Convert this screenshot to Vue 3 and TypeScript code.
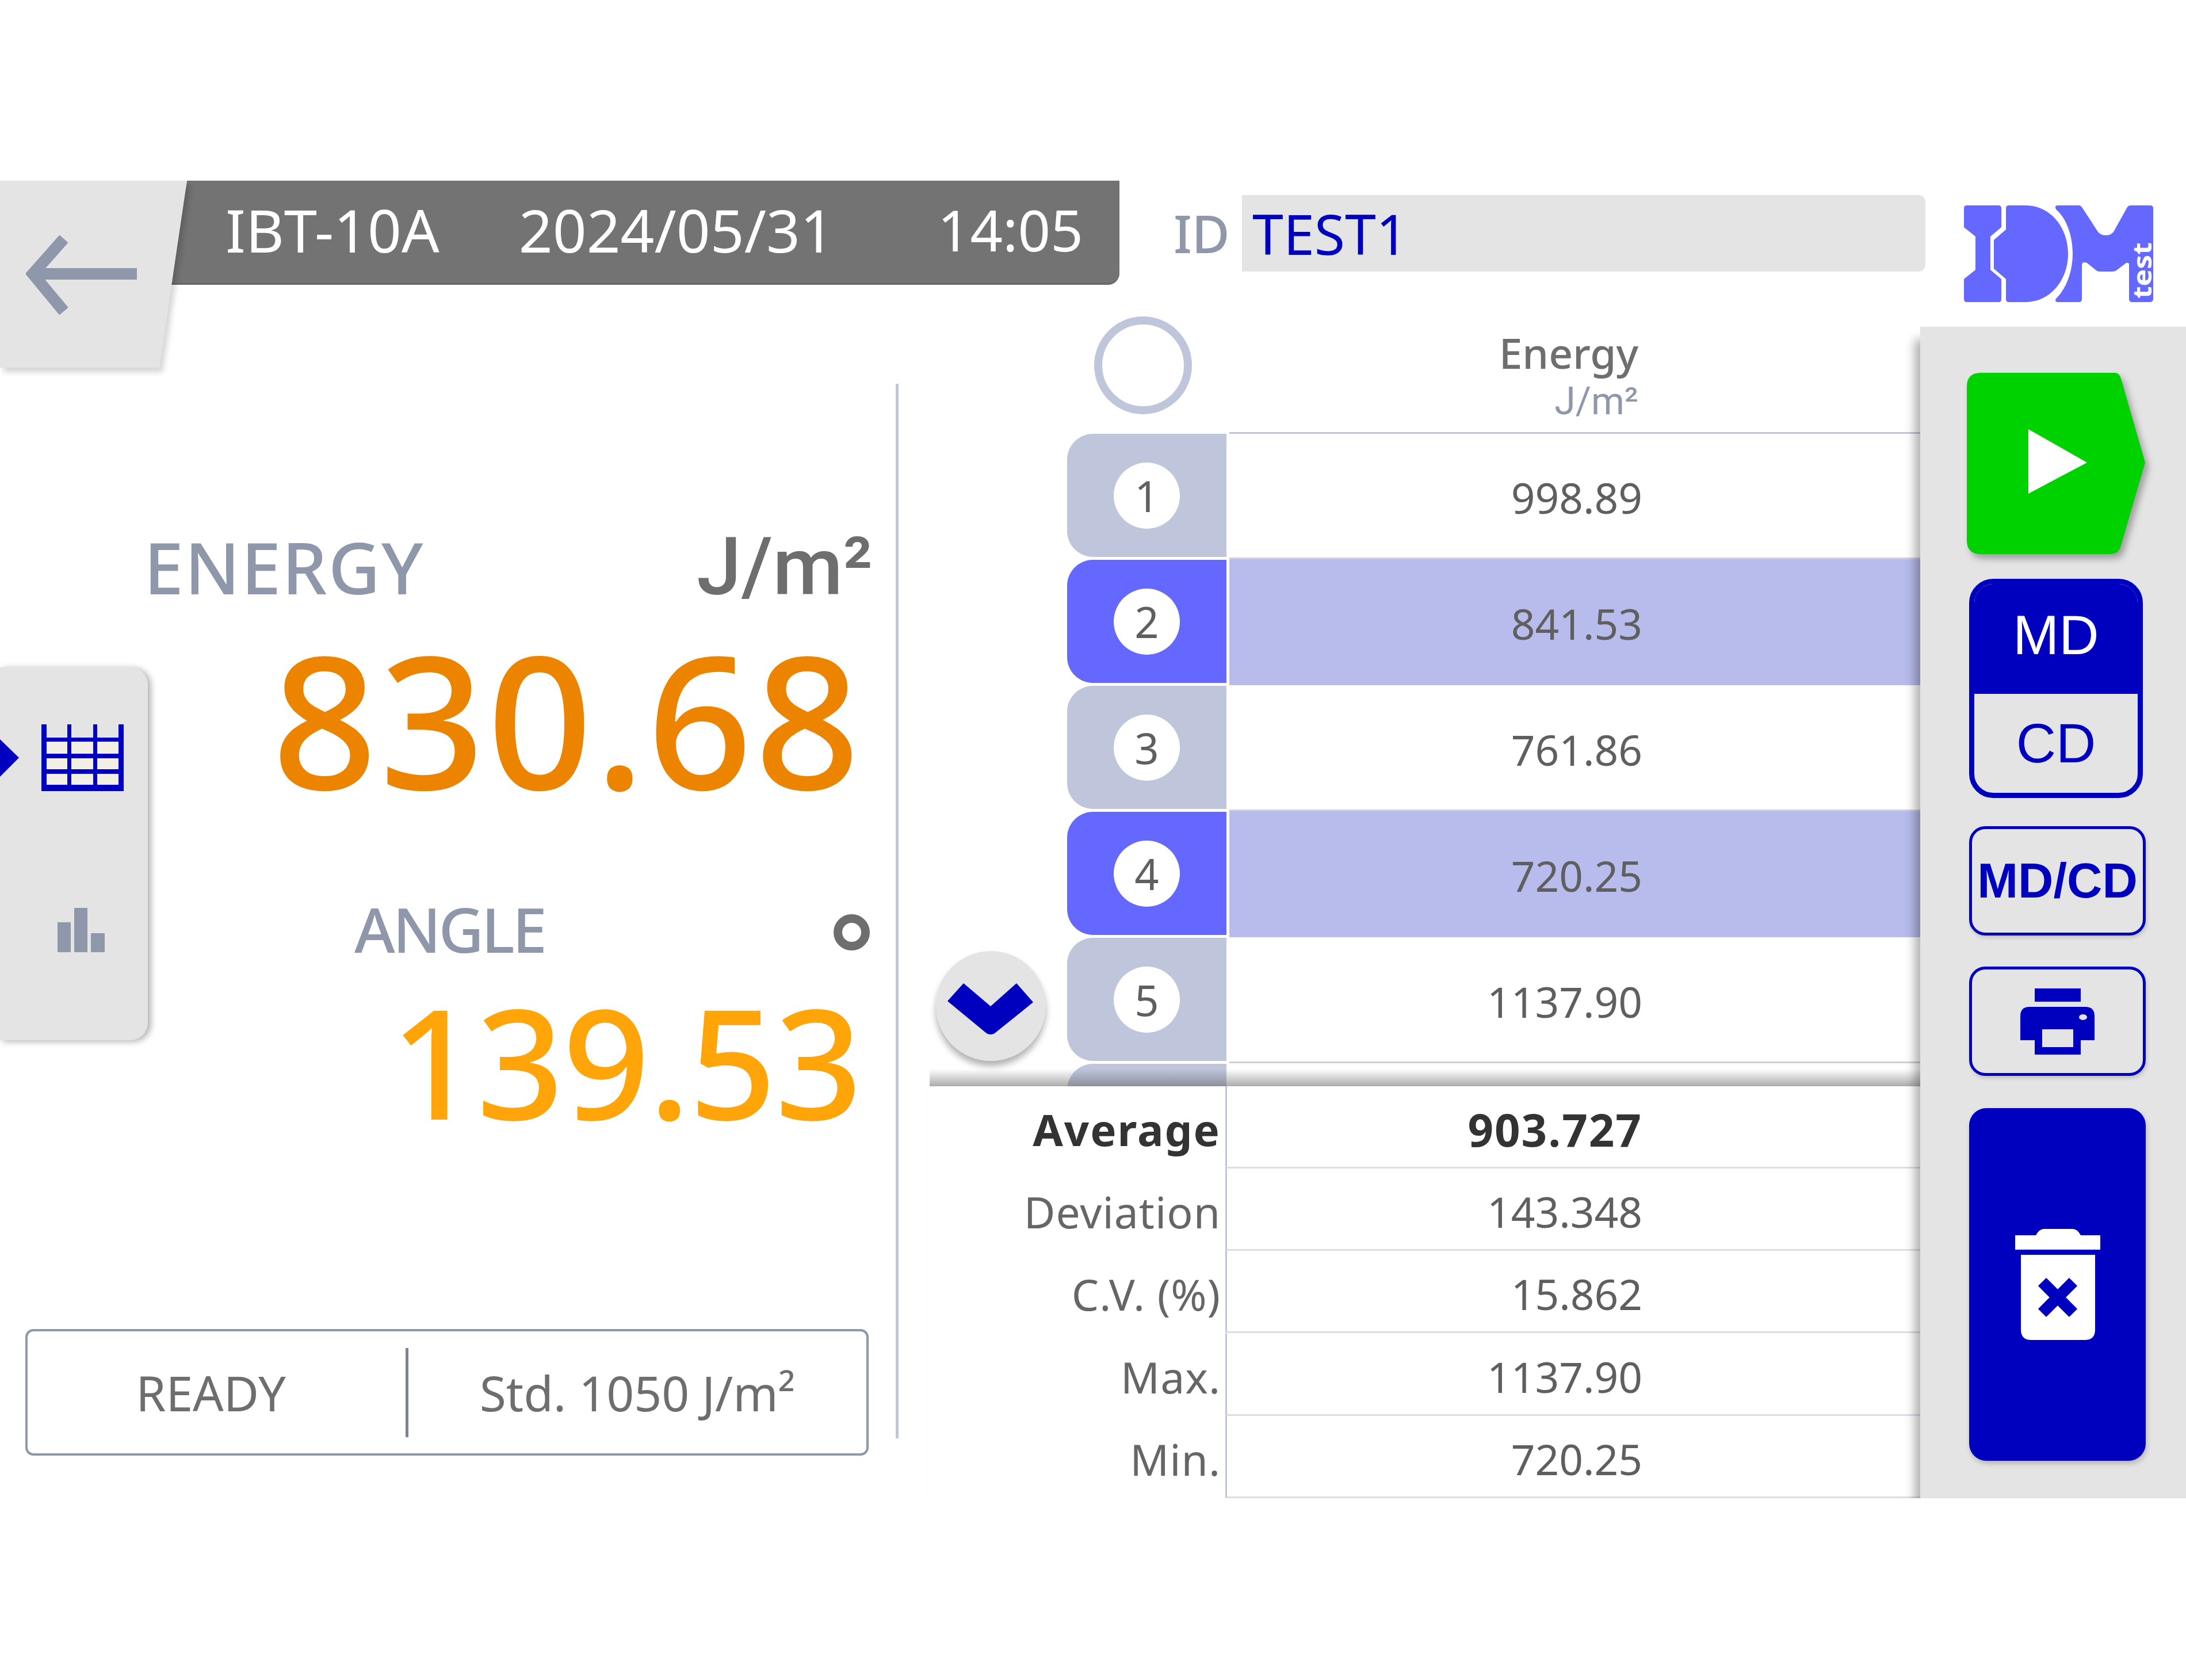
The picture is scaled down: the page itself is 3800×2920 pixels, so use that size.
<script setup lang="ts">
interface Row { n: number; value: string; on: boolean }
interface Stat { label: string; value: string; strong: boolean }
const rows: Row[] = [
  { n: 1, value: '998.89', on: false },
  { n: 2, value: '841.53', on: true },
  { n: 3, value: '761.86', on: false },
  { n: 4, value: '720.25', on: true },
  { n: 5, value: '1137.90', on: false },
]
const stats: Stat[] = [
  { label: 'Average', value: '903.727', strong: true },
  { label: 'Deviation', value: '143.348', strong: false },
  { label: 'C.V. (%)', value: '15.862', strong: false },
  { label: 'Max.', value: '1137.90', strong: false },
  { label: 'Min.', value: '720.25', strong: false },
]
</script>

<template>
  <div class="app">
    <div class="screen">
      <div class="top">
        <div class="headwrap">
          <div class="head">
            <span class="model">IBT-10A</span>
            <span class="date">2024/05/31</span>
            <span class="time">14:05</span>
          </div>
          <div class="backshadow">
            <button class="back">
              <svg width="200" height="140" viewBox="0 0 200 140" fill="none" stroke="#8f97ab" stroke-width="20">
                <path d="M14 67H193" />
                <path d="M66 6L12 67L66 132" />
              </svg>
            </button>
          </div>
        </div>
        <div class="idrow">
          <span class="idlabel">ID</span>
          <div class="idfield">TEST1</div>
        </div>
        <svg class="logo" width="345" height="168" viewBox="0 0 345 168" fill="#6468ff">
          <path d="M5 0H60Q65 0 65 5V38L46 54V112L65 128V163Q65 168 60 168H5Q0 168 0 163V128L20 112V54L0 38V5Q0 0 5 0Z" />
          <path d="M78 0H107C150 0 181 38 181 84C181 130 150 168 107 168H78Q73 168 73 163V128L52 110V60L73 42V5Q73 0 78 0Z" />
          <path d="M163 0H200Q203 0 205 3L233 46Q238 52 247 52Q255 52 260 46L284 3Q286 0 290 0H324Q329 0 329 5V162Q329 168 323 168H292Q287 168 287 162V103Q287 99 282 100L265 113Q262 115 258 115H236Q233 115 230 113L214 100Q205 97 205 104V162Q205 168 200 168H163Q157 168 160 162C178 145 189 115 189 84C189 52 178 22 160 7Q157 0 163 0Z" />
          <text transform="translate(326 162) rotate(-90)" font-size="44" font-weight="700" font-family="Noto Sans" fill="#fff" textLength="98" lengthAdjust="spacingAndGlyphs">test</text>
        </svg>
      </div>

      <div class="body">
        <section class="left">
          <div class="measure">
            <div class="tabs">
              <div class="tabrow">
                <svg class="marker" width="33" height="65" viewBox="0 0 33 65"><polygon points="0,0 33,32 0,65" fill="#0000bf" /></svg>
                <svg width="143" height="116" viewBox="0 0 143 116">
                  <g fill="#f2f0e6">
                    <rect x="9" y="30" width="36" height="21" /><rect x="52" y="30" width="38" height="21" /><rect x="97" y="30" width="37" height="21" />
                    <rect x="9" y="59" width="36" height="19" /><rect x="52" y="59" width="38" height="19" /><rect x="97" y="59" width="37" height="19" />
                    <rect x="9" y="86" width="36" height="19" /><rect x="52" y="86" width="38" height="19" /><rect x="97" y="86" width="37" height="19" />
                  </g>
                  <g fill="#0000bf">
                    <rect x="0" y="0" width="9" height="116" /><rect x="45" y="0" width="7" height="116" /><rect x="90" y="0" width="7" height="116" /><rect x="134" y="0" width="9" height="116" />
                    <rect x="0" y="23" width="143" height="7" /><rect x="0" y="51" width="143" height="8" /><rect x="0" y="78" width="143" height="8" /><rect x="0" y="105" width="143" height="11" />
                  </g>
                </svg>
              </div>
              <svg class="bars" width="82" height="77" viewBox="0 0 82 77" fill="#8f97ab">
                <rect x="0" y="25" width="23" height="52" />
                <rect x="29" y="0" width="23" height="77" />
                <rect x="58" y="44" width="24" height="33" />
              </svg>
            </div>
            <div class="readings">
              <div class="labelrow">
                <span class="energy">ENERGY</span>
                <span class="unit">J/m²</span>
              </div>
              <div class="bignum">830.68</div>
              <div class="anglerow">
                <span class="angle">ANGLE</span>
                <span class="degree"></span>
              </div>
              <div class="anglenum">139.53</div>
            </div>
          </div>
          <div class="status">
            <div class="ready">READY</div>
            <div class="std">Std. 1050 J/m²</div>
          </div>
        </section>

        <section class="tablewrap">
          <div class="scroll">
            <div class="thead">
              <span class="selector"></span>
              <div class="colhead">
                <div class="colname">Energy</div>
                <div class="colunit">J/m²</div>
              </div>
            </div>
            <div v-for="r in rows" :key="r.n" class="row" :class="{ on: r.on }">
              <div class="tile"><span class="num">{{ r.n }}</span></div>
              <div class="val">{{ r.value }}</div>
            </div>
            <div class="row">
              <div class="tile"></div>
              <div class="val"></div>
            </div>
            <div class="band"></div>
            <button class="down">
              <svg width="191" height="191" viewBox="0 0 191 191"><path d="M20 87L48 56L95 96L140 56L169 89L102 143Q95 147 88 143Z" fill="#0000bf" /></svg>
            </button>
          </div>
          <div class="stats">
            <div v-for="s in stats" :key="s.label" class="stat" :class="{ strong: s.strong }">
              <div class="statlabel">{{ s.label }}</div>
              <div class="statval">{{ s.value }}</div>
            </div>
          </div>
        </section>

        <aside class="side">
          <button class="start">
            <svg width="310" height="315" viewBox="0 0 310 315">
              <path d="M24 0H258Q265 0 268 10L310 156L268 300Q264 315 250 315H24Q0 315 0 291V24Q0 0 24 0Z" fill="#00d200" />
              <polygon points="107,98 209,156 107,210" fill="#fff" />
            </svg>
          </button>
          <div class="toggle">
            <div class="md">MD</div>
            <div class="cd">CD</div>
          </div>
          <button class="outline mdcd">MD/CD</button>
          <button class="outline print">
            <svg width="129" height="115" viewBox="0 0 129 115" fill="#0000bf">
              <rect x="25" y="0" width="80" height="23" />
              <path d="M16 32H113Q129 32 129 48V90H0V48Q0 32 16 32Z" />
              <rect x="25" y="60" width="80" height="55" />
              <rect x="38" y="71" width="54" height="31" fill="#e4e4e4" />
              <ellipse cx="109" cy="50" rx="7" ry="5" fill="#e4e4e4" />
            </svg>
          </button>
          <button class="trash">
            <svg width="148" height="193" viewBox="0 0 148 193">
              <path d="M0 11H36Q42 0 50 0H100Q108 0 114 11H148V36H0Z" fill="#fff" />
              <path d="M10 45H139V175Q139 193 121 193H28Q10 193 10 175Z" fill="#fff" />
              <path d="M47 92L101 146M101 92L47 146" stroke="#0000bf" stroke-width="20" fill="none" />
            </svg>
          </button>
        </aside>
      </div>
    </div>
  </div>
</template>

<style scoped>
.app {
  width: 3800px;
  height: 2920px;
  padding-top: 314px;
  box-sizing: border-box;
  background: #fff;
  font-family: "Noto Sans", "Open Sans", sans-serif;
  color: #5f5f5f;
}
button {
  border: 0;
  padding: 0;
  font: inherit;
  display: block;
}
.screen {
  height: 2290px;
  overflow: hidden;
}
.top {
  height: 236px;
  display: flex;
  align-items: flex-start;
}
.headwrap {
  position: relative;
  width: 1946px;
  flex: none;
}
.head {
  height: 181px;
  box-sizing: border-box;
  padding: 0 0 8px 392px;
  background: #737373;
  border-bottom: 3px solid #666;
  border-radius: 0 0 20px 0;
  clip-path: polygon(325px 0, 100% 0, 100% 100%, 296px 100%);
  display: flex;
  align-items: center;
  color: #fff;
  font-size: 103px;
  line-height: 170px;
  white-space: nowrap;
}
.date { margin-left: 138px; }
.time {
  margin-left: 180px;
  font-size: 99px;
}
.backshadow {
  position: absolute;
  left: 0;
  top: 0;
  filter: drop-shadow(6px 8px 5px rgba(0, 0, 0, 0.16));
}
.back {
  display: flex;
  align-items: flex-start;
  width: 325px;
  height: 325px;
  background: #e4e4e4;
  clip-path: polygon(0 0, 100% 0, 277px 100%, 0 100%);
  padding: 95px 0 0 45px;
  box-sizing: border-box;
}
.idrow {
  display: flex;
  margin: 25px 0 0 94px;
  flex: none;
}
.idlabel {
  width: 119px;
  height: 133px;
  color: #8f97ab;
  font-size: 90px;
  line-height: 133px;
  font-weight: 500;
}
.idfield {
  width: 1188px;
  height: 133px;
  box-sizing: border-box;
  padding-left: 18px;
  border-radius: 0 12px 12px 0;
  background: #e4e4e4;
  color: #0000bf;
  font-size: 97px;
  line-height: 133px;
}
.logo {
  margin: 43px 0 0 67px;
  flex: none;
}
.body {
  height: 2054px;
  display: grid;
  grid-template-columns: 1610px 1728px 462px;
}
.left {
  width: 1562px;
  height: 1833px;
  box-sizing: border-box;
  margin-top: 117px;
  border-right: 5px solid #bfc6dc;
}
.measure {
  height: 1643px;
  display: flex;
}
.tabs {
  flex: none;
  width: 257px;
  height: 648px;
  margin-top: 493px;
  box-sizing: border-box;
  padding-top: 99px;
  background: #e4e4e4;
  border-radius: 0 30px 30px 0;
  box-shadow: 5px 2px 12px rgba(0, 0, 0, 0.32);
}
.tabrow {
  display: flex;
  align-items: center;
}
.marker { margin-right: 39px; }
.bars {
  display: block;
  margin: 203px 0 0 100px;
}
.readings {
  flex: 1;
  padding: 248px 45px 0 0;
}
.labelrow {
  display: flex;
  justify-content: space-between;
  align-items: baseline;
  height: 140px;
}
.energy {
  margin-left: -7px;
  color: #8f97ab;
  font-size: 124px;
  line-height: 140px;
  font-weight: 500;
  letter-spacing: 2px;
}
.unit {
  margin-right: -5px;
  color: #6e6e6e;
  font-family: Roboto, "Noto Sans", sans-serif;
  font-size: 140px;
  line-height: 140px;
  font-weight: 500;
}
.bignum {
  margin-top: 33px;
  padding-right: 13px;
  text-align: right;
  color: #ec8400;
  font-size: 320px;
  line-height: 320px;
  font-weight: 500;
  letter-spacing: 4px;
}
.anglerow {
  display: flex;
  justify-content: space-between;
  align-items: center;
  height: 130px;
  margin-top: 142px;
  padding-left: 359px;
}
.angle {
  color: #8f97ab;
  font-size: 108px;
  line-height: 130px;
  font-weight: 500;
  letter-spacing: -4px;
}
.degree {
  width: 63px;
  height: 63px;
  box-sizing: border-box;
  border: 15px solid #6e6e6e;
  border-radius: 50%;
  margin-top: 10px;
}
.anglenum {
  margin-top: 31px;
  padding-right: 15px;
  text-align: right;
  color: #ffa50a;
  font-size: 265px;
  line-height: 265px;
  font-weight: 500;
  letter-spacing: -2px;
}
.status {
  width: 1466px;
  height: 220px;
  margin-left: 44px;
  box-sizing: border-box;
  border: 4px solid #8f97ab;
  border-radius: 14px;
  display: grid;
  grid-template-columns: 662px 1fr;
  align-items: center;
  font-size: 84px;
  line-height: 155px;
  color: #6e6e6e;
}
.ready {
  text-align: center;
  padding-right: 20px;
  border-right: 5px solid #7c8398;
}
.std {
  text-align: center;
}
.tablewrap {
  min-width: 0;
}
.scroll {
  position: relative;
  height: 1338px;
  overflow: hidden;
}
.thead {
  height: 204px;
  box-sizing: border-box;
  padding-left: 292px;
  display: flex;
}
.selector {
  width: 170px;
  height: 170px;
  box-sizing: border-box;
  border: 14px solid #bfc6dc;
  border-radius: 50%;
  flex: none;
}
.colhead {
  flex: none;
  box-sizing: border-box;
  width: 1201px;
  height: 204px;
  margin-left: 65px;
  padding: 18px 490px 0 0;
  text-align: right;
  border-bottom: 3px solid #bfc6dc;
}
.colname {
  font-size: 73px;
  line-height: 90px;
  font-weight: 500;
  color: #6e6e6e;
}
.colunit {
  margin-top: 2px;
  font-family: Roboto, "Noto Sans", sans-serif;
  font-size: 66px;
  line-height: 76px;
  color: #8f97ab;
}
.row {
  height: 219px;
  display: grid;
  grid-template-columns: 245px 277px 1fr;
  column-gap: 0;
}
.tile {
  grid-column: 2;
  height: 214px;
  background: #bfc6dc;
  border-radius: 45px 0 0 45px;
  display: flex;
  align-items: center;
  justify-content: center;
}
.row.on .tile { background: #6468ff; }
.num {
  width: 115px;
  height: 115px;
  border-radius: 50%;
  background: #fff;
  text-align: center;
  font-size: 74px;
  line-height: 115px;
  color: #5f5f5f;
}
.val {
  grid-column: 3;
  height: 219px;
  box-sizing: border-box;
  margin: -1px 0 0 5px;
  padding-right: 483px;
  border-bottom: 3px solid #cfcfdc;
  text-align: right;
  font-size: 73px;
  line-height: 223px;
}
.row.on .val {
  background: #b8bcec;
  border-bottom-color: #b8bcec;
}
.band {
  position: absolute;
  left: 6px;
  right: 0;
  bottom: 0;
  height: 30px;
  background: linear-gradient(rgba(100, 100, 100, 0), rgba(90, 90, 90, 0.5));
}
.down {
  position: absolute;
  left: 17px;
  top: 1103px;
  width: 191px;
  height: 191px;
  border-radius: 50%;
  background: #e4e4e4;
  box-shadow: 0 9px 12px rgba(0, 0, 0, 0.3);
}
.down svg { display: block; }
.stats {
  height: 716px;
  display: grid;
  grid-template-rows: repeat(5, 1fr);
  border-left: 2px solid #fbfbfb;
  box-sizing: border-box;
}
.stat {
  display: grid;
  grid-template-columns: 518px 1fr;
  height: 143px;
  font-size: 73px;
  line-height: 150px;
  color: #5f5f5f;
}
.statlabel {
  height: 143px;
  text-align: right;
  padding-right: 8px;
  color: #666;
  font-size: 75px;
  letter-spacing: 1px;
}
.statval {
  height: 143px;
  box-sizing: border-box;
  border-left: 3px solid #bfc6dc;
  border-bottom: 3px solid #dddde6;
  padding-right: 483px;
  text-align: right;
}
.strong {
  font-weight: 700;
  font-size: 78px;
  color: #333;
  letter-spacing: 2px;
}
.strong .statlabel {
  color: #333;
  font-size: 76px;
  letter-spacing: 2px;
}
.side {
  position: relative;
  height: 2036px;
  margin-top: 18px;
  box-sizing: border-box;
  padding: 80px 0 0 85px;
  background: #e4e4e4;
  box-shadow: -14px 18px 16px -4px rgba(0, 0, 0, 0.3);
}
.start {
  margin-left: -4px;
  width: 310px;
  height: 315px;
  background: none;
  filter: drop-shadow(6px 8px 6px rgba(0, 0, 0, 0.3));
}
.start svg { display: block; }
.toggle {
  width: 302px;
  height: 381px;
  margin-top: 43px;
  box-sizing: border-box;
  border: 9px solid #0000bf;
  border-radius: 42px;
  overflow: hidden;
  font-family: "Liberation Sans", Arial, sans-serif;
  font-size: 96px;
  text-align: center;
  color: #0000bf;
}
.md {
  height: 191px;
  background: #0000bf;
  color: #fff;
  line-height: 178px;
}
.cd { line-height: 172px; }
.outline {
  width: 307px;
  height: 190px;
  box-sizing: border-box;
  border: 5px solid #0000bf;
  border-radius: 28px;
  background: #e4e4e4;
  box-shadow: 2px 4px 6px rgba(0, 0, 0, 0.15);
  color: #0000bf;
  display: flex;
  align-items: center;
  justify-content: center;
}
.mdcd {
  margin-top: 49px;
  font-family: "Liberation Sans", Arial, sans-serif;
  font-weight: 700;
  font-size: 85px;
  white-space: nowrap;
}
.print { margin-top: 54px; }
.trash {
  width: 307px;
  height: 613px;
  margin-top: 56px;
  border-radius: 30px;
  background: #0000bf;
  box-shadow: 2px 5px 8px rgba(0, 0, 0, 0.2);
  display: flex;
  align-items: center;
  justify-content: center;
}
</style>

<style>
html, body { background: #fff; }
</style>
